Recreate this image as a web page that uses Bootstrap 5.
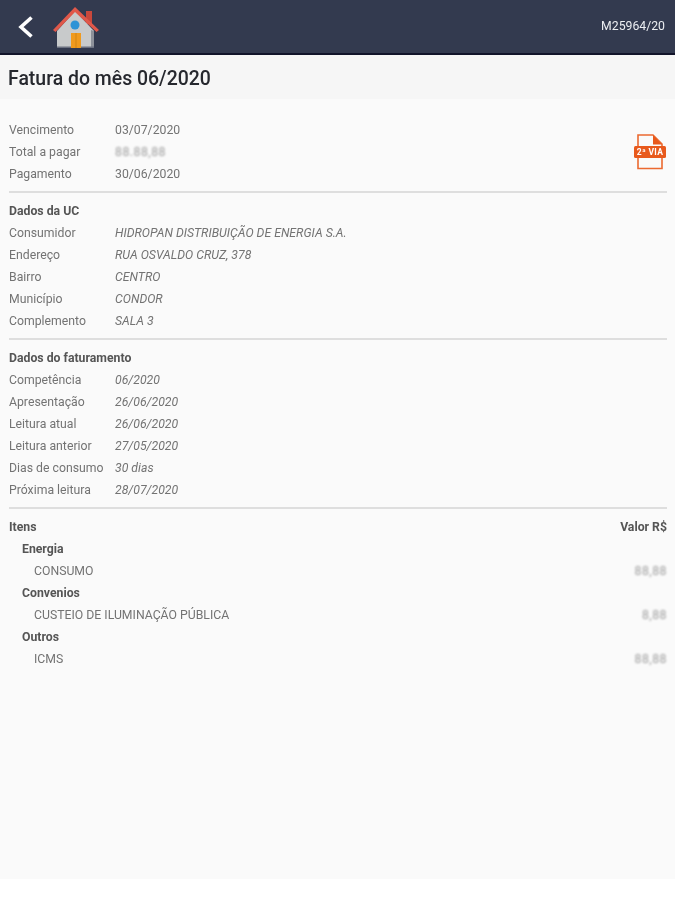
<!DOCTYPE html>
<html lang="en">
<head>
    <meta charset="UTF-8">
    <meta name="viewport" content="width=device-width, initial-scale=1.0">
    <title>Fatura do mês</title>
    <link href="https://cdn.jsdelivr.net/npm/bootstrap@5.3.0/dist/css/bootstrap.min.css" rel="stylesheet">
    <style>
body {
    background: #fff;
    font-family: Roboto, "Liberation Sans", sans-serif;
    font-size: 12.25px;
    color: #737373;
}
.soft {
    filter: blur(.55px);
}
.app-top {
    height: 55px;
    background: #333a4f;
    border-bottom: 2px solid #12142a;
    padding: 0 10px 0 17px;
}
.app-code {
    color: #eceef2;
    font-size: 12.25px;
}
.app-home {
    margin-left: 19px;
    margin-top: 2px;
}
.title-band {
    height: 44px;
    background: #f6f6f6;
    padding: 3px 0 0 8px;
    font-size: 19.45px;
    font-weight: 500;
    color: #26282e;
}
.app-body {
    height: 780px;
    background: #fafafa;
    padding: 20px 8px 0 9px;
}
.info-row {
    height: 22px;
    line-height: 22px;
    white-space: nowrap;
}
.info-label {
    width: 106px;
    flex-shrink: 0;
}
.info-val {
    font-style: italic;
}
.section-head {
    height: 22px;
    line-height: 22px;
    font-weight: 700;
    color: #555;
}
.sep {
    height: 2px;
    background: #dedede;
    margin: 6px 0 7px;
}
.hidden-val {
    color: #a0a0a0;
    filter: blur(1px);
    letter-spacing: .5px;
}
.lvl-1 {
    padding-left: 13px;
}
.lvl-2 {
    padding-left: 25px;
}
.via-icon {
    margin-top: 14px;
    margin-right: 1px;
}
    </style>
</head>
<body>
    <div class="app-top d-flex align-items-center justify-content-between">
        <div class="d-flex align-items-center soft">
            <svg width="17" height="24" viewBox="0 0 17 24">
                <path d="M14.5 2.5 L4 12 L14.5 21.5" fill="none" stroke="#fff" stroke-width="3.6"/>
            </svg>
            <svg class="app-home" width="46" height="43" viewBox="0 0 46 43">
                <rect x="33" y="5" width="6" height="13" fill="#c9483c"/>
                <path d="M4 25 L22 5 L41 25 L41 42 L4 42 Z" fill="#c8cacb"/>
                <path d="M38 24 L41 25 L41 42 L38 42 Z" fill="#8d919a"/>
                <rect x="4" y="40.5" width="37" height="1.5" fill="#6b7080"/>
                <path d="M0 24 L22 1 L46 24 L43.5 26 L22 6 L2.5 26 Z" fill="#e0584a"/>
                <circle cx="22" cy="19" r="4.5" fill="#2f93d6"/>
                <rect x="18" y="27" width="10" height="15" fill="#f09a1e"/>
                <rect x="22.5" y="27" width="1" height="15" fill="#cf8414"/>
            </svg>
        </div>
        <span class="app-code soft">M25964/20</span>
    </div>

    <div class="title-band d-flex align-items-center"><span class="soft">Fatura do mês 06/2020</span></div>

    <div class="app-body">
        <div class="soft">
            <div class="d-flex justify-content-between">
                <div>
                    <div class="info-row d-flex"><span class="info-label">Vencimento</span><span>03/07/2020</span></div>
                    <div class="info-row d-flex"><span class="info-label">Total a pagar</span><span class="hidden-val">88.88,88</span></div>
                    <div class="info-row d-flex"><span class="info-label">Pagamento</span><span>30/06/2020</span></div>
                </div>
                <svg class="via-icon" width="32" height="37" viewBox="0 0 32 37">
                    <path d="M4 13 V2 H19 L28 11 V13 M4 25 V35.5 H28 V25" fill="none" stroke="#ec6a30" stroke-width="1.6"/>
                    <path d="M19 2 V11.5 H28 Z" fill="#e8591c"/>
                    <rect x="0" y="13" width="32" height="12" rx="1.5" fill="#e8591c"/>
                    <text x="16" y="22.3" text-anchor="middle" font-family="Roboto, 'Liberation Sans', sans-serif" font-size="8.5" font-weight="700" letter-spacing=".3" fill="#fff">2ª VIA</text>
                </svg>
            </div>
            <div class="sep"></div>

            <div class="section-head">Dados da UC</div>
            <div class="info-row d-flex"><span class="info-label">Consumidor</span><span class="info-val">HIDROPAN DISTRIBUIÇÃO DE ENERGIA S.A.</span></div>
            <div class="info-row d-flex"><span class="info-label">Endereço</span><span class="info-val">RUA OSVALDO CRUZ, 378</span></div>
            <div class="info-row d-flex"><span class="info-label">Bairro</span><span class="info-val">CENTRO</span></div>
            <div class="info-row d-flex"><span class="info-label">Município</span><span class="info-val">CONDOR</span></div>
            <div class="info-row d-flex"><span class="info-label">Complemento</span><span class="info-val">SALA 3</span></div>
            <div class="sep"></div>

            <div class="section-head">Dados do faturamento</div>
            <div class="info-row d-flex"><span class="info-label">Competência</span><span class="info-val">06/2020</span></div>
            <div class="info-row d-flex"><span class="info-label">Apresentação</span><span class="info-val">26/06/2020</span></div>
            <div class="info-row d-flex"><span class="info-label">Leitura atual</span><span class="info-val">26/06/2020</span></div>
            <div class="info-row d-flex"><span class="info-label">Leitura anterior</span><span class="info-val">27/05/2020</span></div>
            <div class="info-row d-flex"><span class="info-label">Dias de consumo</span><span class="info-val">30 dias</span></div>
            <div class="info-row d-flex"><span class="info-label">Próxima leitura</span><span class="info-val">28/07/2020</span></div>
            <div class="sep"></div>

            <div class="section-head d-flex justify-content-between"><span>Itens</span><span>Valor R$</span></div>
            <div class="section-head lvl-1">Energia</div>
            <div class="info-row d-flex justify-content-between lvl-2"><span>CONSUMO</span><span class="hidden-val">88,88</span></div>
            <div class="section-head lvl-1">Convenios</div>
            <div class="info-row d-flex justify-content-between lvl-2"><span>CUSTEIO DE ILUMINAÇÃO PÚBLICA</span><span class="hidden-val">8,88</span></div>
            <div class="section-head lvl-1">Outros</div>
            <div class="info-row d-flex justify-content-between lvl-2"><span>ICMS</span><span class="hidden-val">88,88</span></div>
        </div>
    </div>
    <script src="https://cdn.jsdelivr.net/npm/bootstrap@5.3.0/dist/js/bootstrap.bundle.min.js"></script>
</body>
</html>
